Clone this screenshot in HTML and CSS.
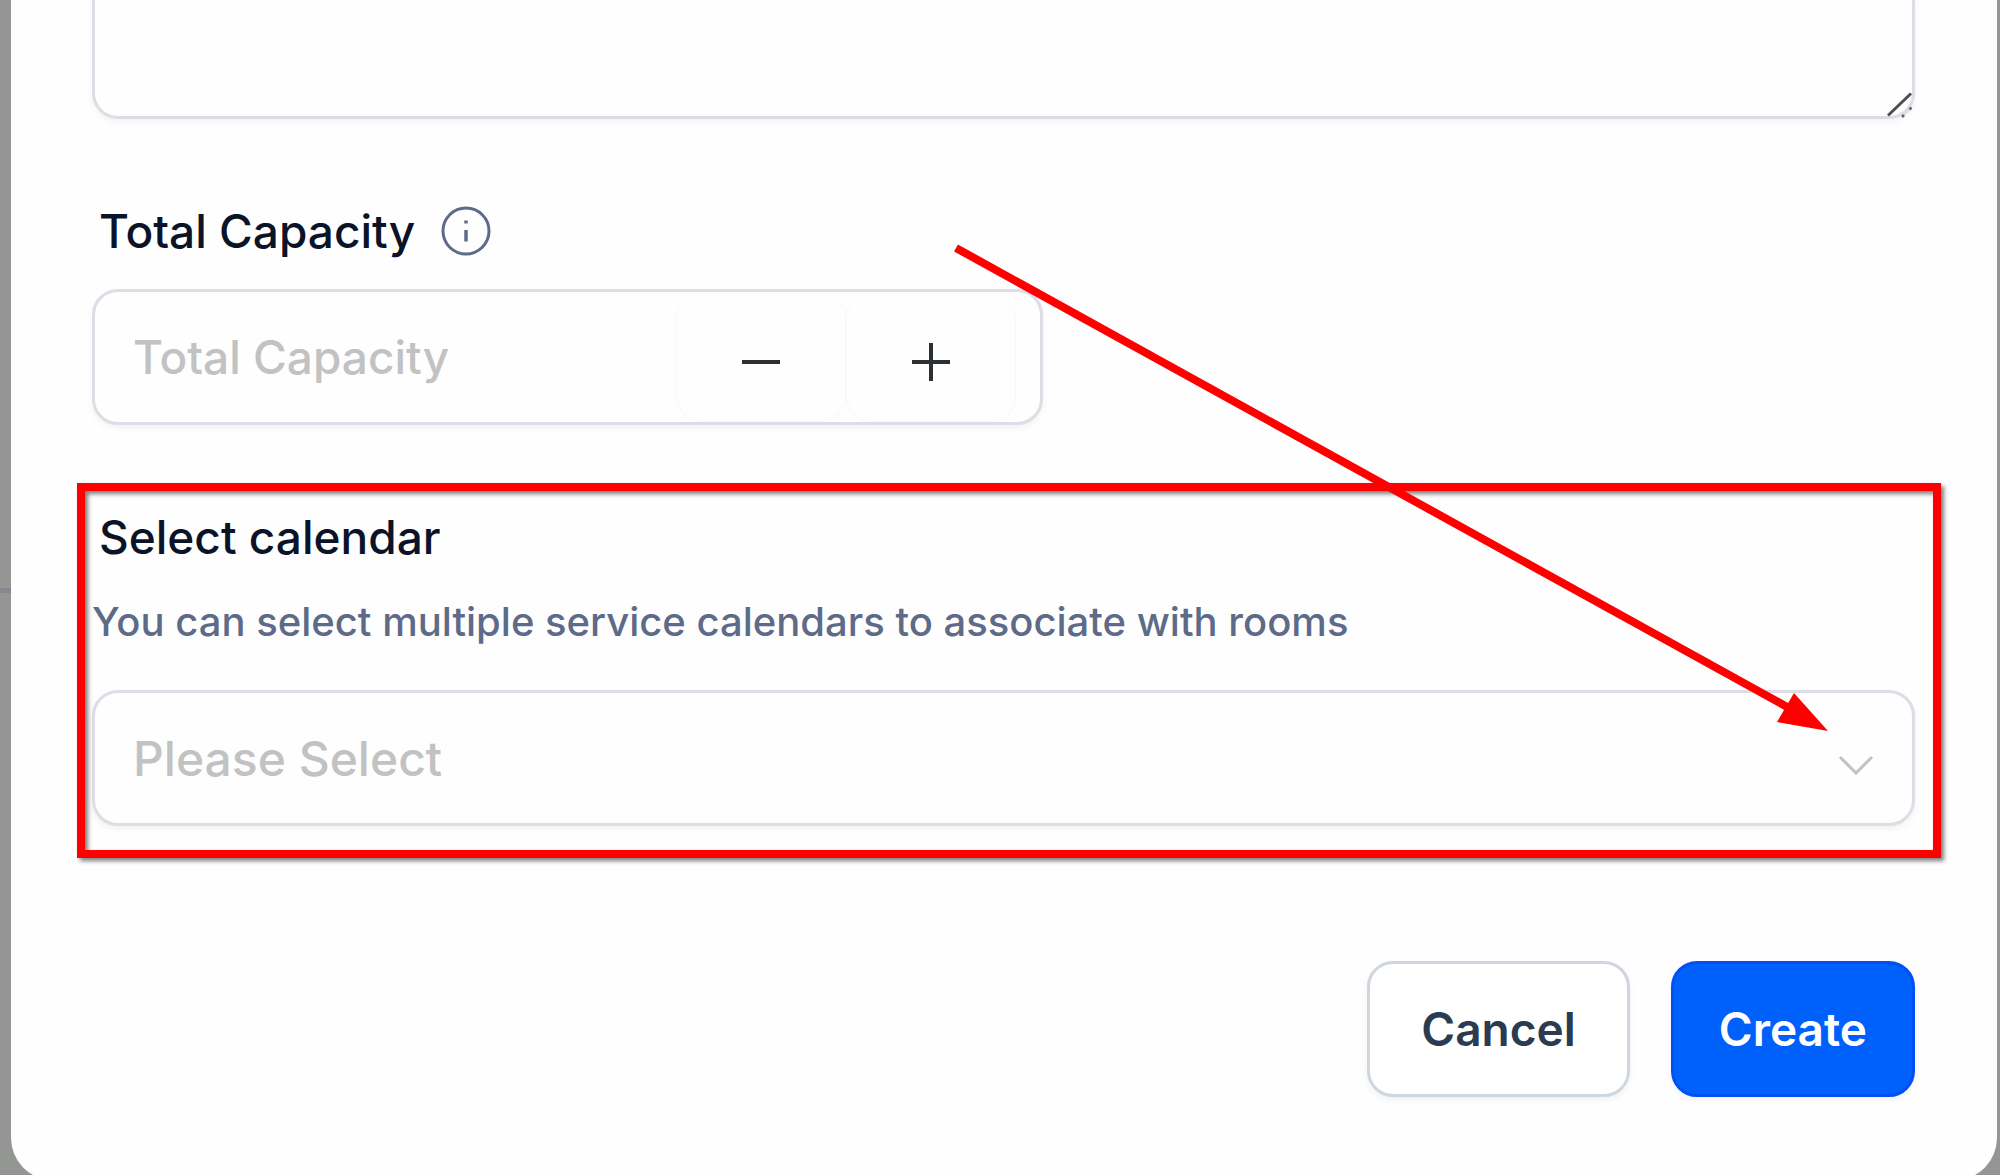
FILE: index.html
```html
<!DOCTYPE html>
<html lang="en">
<head>
  <meta charset="UTF-8">
  <title>Create room</title>
  <meta name="viewport" content="width=device-width, initial-scale=1.0">
  <link rel="stylesheet" href="styles.css">
</head>
<body>

<form class="modal">
  <div class="textarea-wrap">
    <textarea class="field description" aria-label="Description"></textarea>
    <svg class="grip" width="26" height="26" viewBox="0 0 26 26" aria-hidden="true">
      <path d="M1 23.5L24 1.500" stroke="#4c4c4c" stroke-width="3"/>
      <path d="M15 25L24 16" stroke="#dedde6" stroke-width="2"/>
      <path d="M15 25l2-2M22.500 17.500l2-2" stroke="#666" stroke-width="2.500"/>
    </svg>
  </div>

  <div class="group">
    <div class="label-row">
      <label for="capacity">Total Capacity</label>
      <svg class="info" width="50" height="50" viewBox="0 0 50 50" fill="none" stroke="#5d6b89" aria-hidden="true">
        <circle cx="25" cy="25" r="23" stroke-width="3"/>
        <path d="M25 24v11.500" stroke-width="3.500"/>
        <path d="M25 14.500v3" stroke-width="3.500"/>
      </svg>
    </div>
    <div class="field number">
      <input type="number" id="capacity" placeholder="Total Capacity">
      <button type="button" class="step" aria-label="Decrease">
        <svg width="38" height="38" viewBox="0 0 38 38" stroke="#2c2f33" stroke-width="4"><path d="M0 19h38"/></svg>
      </button>
      <button type="button" class="step" aria-label="Increase">
        <svg width="38" height="38" viewBox="0 0 38 38" stroke="#2c2f33" stroke-width="4"><path d="M0 19h38M19 0v38"/></svg>
      </button>
    </div>
  </div>

  <div class="group highlighted">
    <div class="label-row">
      <label for="calendar">Select calendar</label>
    </div>
    <p class="help">You can select multiple service calendars to associate with rooms</p>
    <div class="select-wrap">
      <select class="field" id="calendar">
        <option value="">Please Select</option>
      </select>
      <svg class="chevron" width="36" height="20" viewBox="0 0 36 20" fill="none" stroke="#c2c2c2" stroke-width="3" aria-hidden="true">
        <path d="M2 2l16 16L34 2"/>
      </svg>
    </div>
  </div>

  <div class="actions">
    <button type="button" class="btn">Cancel</button>
    <button type="submit" class="btn primary">Create</button>
  </div>

  <svg class="arrow" width="876" height="490" viewBox="0 0 876 490" aria-hidden="true">
    <path d="M3 4L836 464" stroke="#f00" stroke-width="8"/>
    <path d="M875 487L841 449L824 478Z" fill="#f00"/>
  </svg>
</form>

</body>
</html>
```
FILE: styles.css
```css
* {
  box-sizing: border-box;
}

body {
  margin: 0;
  height: 100vh;
  overflow: hidden;
  background: #949694 linear-gradient(#868790, #868790) no-repeat 0 588px / 11px 5px;
  font-family: 'Inter', sans-serif;
  font-size: 46px;
  font-weight: 500;
  color: #0a1328;
}

.modal {
  position: relative;
  margin: 0 3px 0 11px;
  padding: 0 82px 83px 81px;
  background: #fefefe;
  border-radius: 0 0 42px 42px;
}

.field {
  display: block;
  width: 100%;
  height: 136px;
  border: 3px solid #dedde6;
  border-radius: 26px;
  background: #fefefe;
  box-shadow: 0 3px 6px rgba(16, 24, 40, 0.05);
  font: inherit;
}

.textarea-wrap,
.select-wrap {
  position: relative;
}

.description {
  height: 119px;
  padding: 24px 40px;
  border-top: none;
  border-radius: 0 0 26px 26px;
  resize: none;
}

.grip {
  position: absolute;
  right: 2px;
  bottom: 1px;
}

.group {
  margin-top: 83px;
}

.label-row {
  display: flex;
  align-items: center;
  gap: 26px;
  height: 58px;
  padding-left: 7px;
  line-height: 58px;
}

.number {
  display: flex;
  width: calc(52% + 3px);
  margin-top: 29px;
  padding: 0 24px 0 38px;
  overflow: hidden;
}

.number input {
  flex: 1;
  min-width: 0;
  padding: 0;
  border: none;
  outline: none;
  background: transparent;
  font: inherit;
  appearance: textfield;
}

.number input::placeholder {
  color: #c2c2c2;
  opacity: 1;
}

.step {
  display: flex;
  align-items: center;
  justify-content: center;
  width: 170px;
  padding: 10px 0 0;
  border: 1px solid #f8f8fa;
  border-top: none;
  border-radius: 26px;
  background: transparent;
}

.highlighted {
  position: relative;
}

.highlighted::before {
  content: '';
  position: absolute;
  top: -25px;
  right: -26px;
  bottom: -32px;
  left: -15px;
  z-index: 1;
  border: 8px solid #f00;
  filter: drop-shadow(3px 3px 2px rgba(0, 0, 0, 0.5));
  pointer-events: none;
}

.help {
  margin: 32px 0 44px;
  font-size: 40px;
  line-height: 48px;
  color: #5d6b89;
}

select.field {
  padding: 0 100px 0 38px;
  font-size: 48px;
  color: #c2c2c2;
  appearance: none;
}

.chevron {
  position: absolute;
  right: 41px;
  bottom: 51px;
  pointer-events: none;
}

.actions {
  display: flex;
  justify-content: flex-end;
  gap: 41px;
  margin-top: 135px;
}

.btn {
  height: 136px;
  padding: 0 51px;
  border: 3px solid #cfd6e0;
  border-radius: 26px;
  background: #fff;
  box-shadow: 0 3px 6px rgba(16, 24, 40, 0.05);
  font: inherit;
  font-weight: 600;
  color: #2a3b52;
}

.btn.primary {
  padding: 0 45px;
  border-color: #0050f5;
  background: #0060fc;
  color: #fff;
}

.arrow {
  position: absolute;
  top: 244px;
  right: 168px;
  z-index: 2;
  pointer-events: none;
}
```
